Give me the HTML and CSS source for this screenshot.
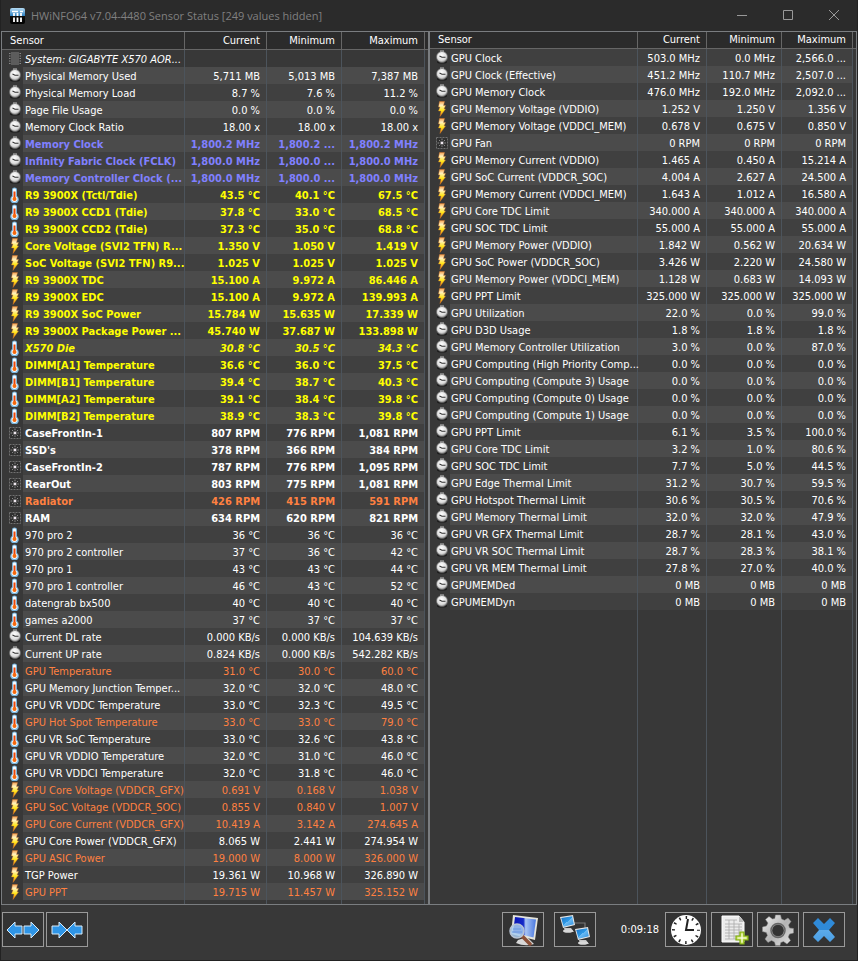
FILE: index.html
```
<!DOCTYPE html>
<html lang="en">
<head>
    <meta charset="UTF-8">
    <meta name="viewport" content="width=device-width, initial-scale=1.0">
    <title>HWiNFO64 Sensor Status</title>
    <link rel="stylesheet" href="styles.css">
</head>
<body>
    <!-- Shared icons -->
    <svg class="sprite" aria-hidden="true">
        <defs>
            <radialGradient id="dial" cx="45%" cy="35%" r="65%">
                <stop offset="0" stop-color="#ffffff"/>
                <stop offset="0.7" stop-color="#dcdcdc"/>
                <stop offset="1" stop-color="#8c8c8c"/>
            </radialGradient>
            <linearGradient id="spark" x1="0" y1="0" x2="0" y2="1">
                <stop offset="0" stop-color="#f5a050"/>
                <stop offset="0.25" stop-color="#fff2c0"/>
                <stop offset="0.6" stop-color="#ffe61a"/>
                <stop offset="1" stop-color="#f07a10"/>
            </linearGradient>
            <linearGradient id="logo" x1="0" y1="0" x2="0" y2="1">
                <stop offset="0" stop-color="#b5dcf5"/>
                <stop offset="0.5" stop-color="#2c7fc0"/>
                <stop offset="0.5" stop-color="#0c0c0c"/>
                <stop offset="1" stop-color="#000000"/>
            </linearGradient>
            <linearGradient id="blue" x1="0" y1="0" x2="1" y2="1">
                <stop offset="0" stop-color="#1a6fc0"/>
                <stop offset="0.5" stop-color="#2f9be8"/>
                <stop offset="0.5" stop-color="#6cbcf5"/>
                <stop offset="1" stop-color="#2d8ddb"/>
            </linearGradient>
            <linearGradient id="cross" x1="0" y1="0" x2="0" y2="1">
                <stop offset="0" stop-color="#2f8ad8"/>
                <stop offset="0.5" stop-color="#2f8ad8"/>
                <stop offset="0.5" stop-color="#5cabea"/>
                <stop offset="1" stop-color="#4a9ee4"/>
            </linearGradient>
            <linearGradient id="screen" x1="0" y1="0" x2="1" y2="0">
                <stop offset="0" stop-color="#0a14b4"/>
                <stop offset="0.45" stop-color="#1428c8"/>
                <stop offset="0.55" stop-color="#a8c4f4"/>
                <stop offset="1" stop-color="#4a78e0"/>
            </linearGradient>
            <linearGradient id="metal" x1="0" y1="0" x2="1" y2="1">
                <stop offset="0" stop-color="#f4f4f4"/>
                <stop offset="0.5" stop-color="#b4b4b4"/>
                <stop offset="1" stop-color="#e4e4e4"/>
            </linearGradient>
        </defs>
        <symbol id="icon-clock" viewBox="0 0 14 16">
            <ellipse cx="7" cy="12" rx="5" ry="1.500" fill="#1c1c1c"/>
            <rect x="5" y="0.500" width="4" height="2" fill="#bdbdbd"/>
            <circle cx="7" cy="7" r="5.500" fill="url(#dial)" stroke="#6a6a6a" stroke-width="0.700"/>
            <path d="M4.500 6 7 7.300h3.500" fill="none" stroke="#333" stroke-width="1.100"/>
        </symbol>
        <symbol id="icon-temp" viewBox="0 0 14 16">
            <path d="M4 2.500Q4 .5 6.500 .5T9 2.500V9A4.300 4.300 0 1 1 4 9Z" fill="#78b4dc"/>
            <path d="M5 2.500Q5 1.500 6.500 1.500T8 2.500V9.500A3 3 0 1 1 5 9.500Z" fill="#f4faff"/>
            <path d="M6.500 4.500V11" stroke="#e8480c" stroke-width="2"/>
            <circle cx="6.500" cy="12" r="2" fill="#f5690c"/>
        </symbol>
        <symbol id="icon-bolt" viewBox="0 0 14 16">
            <path d="M4.500 .5H9.500L8.500 4.500H10.500L9 8H10.500L5 15.500L6 10H3.500L5 6H3.500Z" fill="url(#spark)" stroke="#d87a2c" stroke-width="0.400"/>
        </symbol>
        <symbol id="icon-fan" viewBox="0 0 14 16">
            <rect x="1.500" y="2.500" width="11" height="11" fill="#303030" stroke="#707070" stroke-width="1" stroke-dasharray="2 1"/>
            <path d="M7 3.500V12.500M2.500 8H11.500M4 5L10 11M10 5L4 11" stroke="#8a8a8a" stroke-width="1" stroke-dasharray="1.500 .8"/>
            <circle cx="7" cy="8" r="1.300" fill="#f0e8f0"/>
        </symbol>
        <symbol id="icon-chip" viewBox="0 0 14 16">
            <path d="M1 2.500H13M1 5H13M1 7.500H13M1 10H13M1 12.500H13" stroke="#888" stroke-width="1" stroke-dasharray="1.500 9 1.500"/>
            <rect x="3" y="1" width="8" height="13" fill="#5c5c5c"/>
        </symbol>
        <symbol id="icon-pc" viewBox="0 0 18 18">
            <path d="M5 13L12 13L15 17H6Z" fill="#c8c8c8"/>
            <ellipse cx="9" cy="16" rx="5" ry="1.800" fill="#d8d8d8"/>
            <path d="M1 2L14 0L16 10L4 13Z" fill="#e6e6e6"/>
            <path d="M2.200 3L13.200 1.200L14.800 9.200L4.600 11.800Z" fill="url(#blue)"/>
        </symbol>
    </svg>

    <header class="titlebar">
        <svg class="logo" viewBox="0 0 15 16" aria-hidden="true">
            <rect width="15" height="16" rx="2" fill="url(#logo)"/>
            <path d="M2 3.500H8M10 3.500H13" stroke="#fff" stroke-width="1.500"/>
            <path d="M4 5V14M7.500 5V14M11 5V14" stroke="#fff" stroke-width="1.800" stroke-dasharray="3 1.500 5"/>
        </svg>
        <h1>HWiNFO64 v7.04-4480 Sensor Status [249 values hidden]</h1>
        <div class="window-buttons">
            <button type="button" aria-label="Minimize"><svg viewBox="0 0 10 10"><path d="M0 5.500H10"/></svg></button>
            <button type="button" aria-label="Maximize"><svg viewBox="0 0 10 10"><path d="M.5 .5H9.500V9.500H.5Z"/></svg></button>
            <button type="button" aria-label="Close"><svg viewBox="0 0 10 10"><path d="M0 0L10 10M10 0L0 10"/></svg></button>
        </div>
    </header>

    <main class="panels">
        <table class="sensors sensors-left">
            <colgroup><col class="c-icon"><col><col class="c-cur"><col class="c-min"><col class="c-max"><col class="c-end"></colgroup>
            <thead>
                <tr><th colspan="2">Sensor</th><th>Current</th><th>Minimum</th><th>Maximum</th><td></td></tr>
            </thead>
            <tbody id="left-rows"></tbody>
        </table>
        <table class="sensors sensors-right">
            <colgroup><col class="c-icon"><col><col class="c-cur"><col class="c-min"><col class="c-max"><col class="c-end"></colgroup>
            <thead>
                <tr><th colspan="2">Sensor</th><th>Current</th><th>Minimum</th><th>Maximum</th><td></td></tr>
            </thead>
            <tbody id="right-rows"></tbody>
        </table>
    </main>

    <footer class="toolbar">
        <div class="group">
            <button type="button" aria-label="Expand columns">
                <svg viewBox="0 0 36 24"><g fill="#2f95e6" stroke="#d8ecfa" stroke-width="1"><path d="M2 12L10 4V8H17V16H10V20Z"/><path d="M34 12L26 4V8H19V16H26V20Z"/></g></svg>
            </button>
            <button type="button" aria-label="Shrink columns">
                <svg viewBox="0 0 36 24"><g fill="#2f95e6" stroke="#d8ecfa" stroke-width="1"><path d="M18 12L10 4V8H3V16H10V20Z"/><path d="M18 12L26 4V8H33V16H26V20Z"/></g></svg>
            </button>
        </div>
        <div class="group group-right">
            <button type="button" aria-label="System summary">
                <svg viewBox="0 0 36 32">
                    <path d="M13 26L22 23L29 30Q20 33 11 29Z" fill="#d8d8d8"/>
                    <path d="M8 1L33 4L30 26L6 20Z" fill="#e4e4dc"/>
                    <path d="M10 3L31 5.500L28.500 23.500L8 18.500Z" fill="url(#screen)"/>
                    <path d="M17 22L25 30" stroke="#8c5038" stroke-width="3.500" stroke-linecap="round"/>
                    <circle cx="12" cy="17" r="7" fill="#a8ccf0" fill-opacity="0.850" stroke="#b8c4d4" stroke-width="1.500"/>
                    <path d="M8 15H16M7 18H17" stroke="#6a98e0" stroke-width="1.200"/>
                </svg>
            </button>
            <button type="button" aria-label="Remote monitoring" class="remote">
                <svg viewBox="0 0 36 32">
                    <path d="M17 9H28V16" fill="none" stroke="#777" stroke-width="1.200"/>
                    <use href="#icon-pc" x="2" y="1" width="18" height="18"/>
                    <use href="#icon-pc" x="17" y="13" width="18" height="18"/>
                </svg>
            </button>
            <time class="elapsed">0:09:18</time>
            <button type="button" aria-label="Reset clock">
                <svg viewBox="0 0 36 32">
                    <circle cx="18" cy="16" r="15" fill="#fff"/>
                    <circle cx="18" cy="16" r="12.500" fill="none" stroke="#222" stroke-width="3" stroke-dasharray="1.500 5.045" stroke-dashoffset=".75"/>
                    <path d="M20 5L18 16H26" fill="none" stroke="#222" stroke-width="2"/>
                </svg>
            </button>
            <button type="button" aria-label="Log to file">
                <svg viewBox="0 0 36 32">
                    <path d="M8 2H25L30 8V28H8Z" fill="#ececec" stroke="#fff"/>
                    <path d="M25 2V8H30Z" fill="#bbb"/>
                    <path d="M11 6H23M11 10H28M11 13H28M11 16H28M11 19H28M11 22H28M11 25H22M15 6V25M20 6V25M25 10V22" stroke="#aaa" stroke-width="0.800"/>
                    <path d="M26 18H30V22H34V26H30V30H26V26H22V22H26Z" fill="#c8e05a" stroke="#7fae10" stroke-width="1.200"/>
                    <path d="M28 19.500V28.500M23.500 24H32.500" stroke="#fff" stroke-width="1"/>
                </svg>
            </button>
            <button type="button" aria-label="Settings">
                <svg viewBox="0 0 36 32">
                    <g fill="url(#metal)" stroke="#888" stroke-width="0.500">
                        <path fill-rule="evenodd" d="M15.500 1H20.500L21.500 5L24.500 6.300L28 4L31 7.500L28.500 11L29.500 14L33.500 14.500V19L29.500 20L28.200 23L30.500 26.500L27 30L23.500 27.500L20.800 28.500L20 31.500H15.500L14.500 28L11.500 26.500L8 28.500L5 25L7.500 21.500L6.300 18.500L2.500 17.500V13L6.500 12L8 9L5.500 5.500L9 2.500L12.500 5L14.800 4.500ZM18 10.500A6 6 0 1 0 18.010 10.500Z"/>
                    </g>
                    <circle cx="18" cy="16.500" r="7" fill="none" stroke="#666" stroke-width="1.500"/>
                </svg>
            </button>
            <button type="button" aria-label="Close sensors">
                <svg viewBox="0 0 36 32"><path d="M7 9L12 4L18 10L24 4L29 9L23 16L29 23L24 28L18 22L12 28L7 23L13 16Z" fill="url(#cross)"/></svg>
            </button>
        </div>
    </footer>

    <script src="sensors.js"></script>
</body>
</html>
```
FILE: styles.css
```
* { box-sizing: border-box; }
body { margin: 0; min-height: 100vh; display: flex; flex-direction: column; background: #383838; color: #fff; font-family: "DejaVu Sans Condensed", "DejaVu Sans", sans-serif; font-stretch: condensed; font-size: 11px; border: 1px solid #222; border-top: 0; }
.sprite { position: absolute; width: 0; height: 0; }

/* Title bar */
.titlebar { display: flex; align-items: center; height: 31px; padding-left: 9px; background: #2b2b2b; }
.titlebar h1 { margin: 0 0 0 6px; flex: 1; font: normal 11px "Open Sans", sans-serif; color: #808080; white-space: nowrap; overflow: hidden; }
.logo { width: 15px; height: 16px; }
.window-buttons { display: flex; }
.window-buttons button { width: 46px; height: 31px; padding: 0; border: 0; background: none; }
.window-buttons svg { width: 10px; height: 10px; fill: none; stroke: #999; overflow: visible; }

/* Sensor tables */
.panels { flex: 1; display: grid; grid-template-columns: 1fr 1fr; }
.sensors { width: 100%; height: 100%; table-layout: fixed; border-collapse: separate; border-spacing: 0; border: 1px solid #7a7d80; background: #383838; }
.c-icon { width: 21px; }
.c-cur { width: 82px; }
.c-min { width: 75px; }
.c-max { width: 83px; }
.c-end { width: 3px; }
.sensors-right .c-icon { width: 20px; }
.sensors-right .c-cur { width: 69px; }
.sensors-right .c-max { width: 71px; }
th, td { padding: 0; height: 17px; line-height: 17px; white-space: nowrap; text-align: right; }
thead tr > * { height: 18px; background: #2b2b2b; border-bottom: 1px solid #666; font-weight: normal; }
.sensors-right thead tr > * { height: 17px; padding-bottom: 1px; line-height: 15px; vertical-align: top; }
thead th { padding-right: 6px; border-right: 1px solid #666; }
thead th:first-child { padding-left: 8px; text-align: left; }
.icon svg { display: block; width: 14px; height: 16px; margin-left: 6px; }
.sensors-right .icon svg { margin-left: 5px; }
.name, .value { padding-top: 2px; line-height: 15px; border-right: 1px solid #4c545c; background-color: #404040; background-clip: padding-box; }
.name { padding-left: 2px; text-align: left; }
.sensors-right .name { padding-left: 1px; }
.value { padding-right: 6px; }
tr:nth-child(even) > .name, tr:nth-child(even) > .value { background-color: #4b4b4b; }
.bold { font-weight: bold; }
.italic { font-style: italic; }
.blue { color: #8080ff; }
.yellow { color: #ffff00; }
.orange { color: #ff8040; }
.system > .name, .system > .value, .filler > .name.name, .filler > .value.value { background: none; }
.filler > td { height: auto; line-height: 0; }

/* Toolbar */
.toolbar { display: flex; justify-content: space-between; padding: 7px 12px 13px 1px; }
.group { display: flex; align-items: center; gap: 2px; }
.group-right { gap: 4px; }
.toolbar button { display: flex; align-items: center; justify-content: center; width: 42px; height: 35px; padding: 0; border: 1px solid #999; background: #333; }
.toolbar button svg { width: 36px; height: 32px; }
.toolbar .remote { margin-left: 6px; }
.elapsed { width: 61px; padding-right: 2px; text-align: right; }
```
FILE: sensors.js
```
// icon | name | current | minimum | maximum | style
const left = `
chip|System: GIGABYTE X570 AOR...||||italic system
clock|Physical Memory Used|5,711 MB|5,013 MB|7,387 MB
clock|Physical Memory Load|8.7 %|7.6 %|11.2 %
clock|Page File Usage|0.0 %|0.0 %|0.0 %
clock|Memory Clock Ratio|18.00 x|18.00 x|18.00 x
clock|Memory Clock|1,800.2 MHz|1,800.2 ...|1,800.2 MHz|bold blue
clock|Infinity Fabric Clock (FCLK)|1,800.0 MHz|1,800.0 ...|1,800.0 MHz|bold blue
clock|Memory Controller Clock (...|1,800.0 MHz|1,800.0 ...|1,800.0 MHz|bold blue
temp|R9 3900X (Tctl/Tdie)|43.5 °C|40.1 °C|67.5 °C|bold yellow
temp|R9 3900X CCD1 (Tdie)|37.8 °C|33.0 °C|68.5 °C|bold yellow
temp|R9 3900X CCD2 (Tdie)|37.3 °C|35.0 °C|68.8 °C|bold yellow
bolt|Core Voltage (SVI2 TFN) R...|1.350 V|1.050 V|1.419 V|bold yellow
bolt|SoC Voltage (SVI2 TFN) R9...|1.025 V|1.025 V|1.025 V|bold yellow
bolt|R9 3900X TDC|15.100 A|9.972 A|86.446 A|bold yellow
bolt|R9 3900X EDC|15.100 A|9.972 A|139.993 A|bold yellow
bolt|R9 3900X SoC Power|15.784 W|15.635 W|17.339 W|bold yellow
bolt|R9 3900X Package Power ...|45.740 W|37.687 W|133.898 W|bold yellow
temp|X570 Die|30.8 °C|30.5 °C|34.3 °C|bold italic yellow
temp|DIMM[A1] Temperature|36.6 °C|36.0 °C|37.5 °C|bold yellow
temp|DIMM[B1] Temperature|39.4 °C|38.7 °C|40.3 °C|bold yellow
temp|DIMM[A2] Temperature|39.1 °C|38.4 °C|39.8 °C|bold yellow
temp|DIMM[B2] Temperature|38.9 °C|38.3 °C|39.8 °C|bold yellow
fan|CaseFrontIn-1|807 RPM|776 RPM|1,081 RPM|bold
fan|SSD's|378 RPM|366 RPM|384 RPM|bold
fan|CaseFrontIn-2|787 RPM|776 RPM|1,095 RPM|bold
fan|RearOut|803 RPM|775 RPM|1,081 RPM|bold
fan|Radiator|426 RPM|415 RPM|591 RPM|bold orange
fan|RAM|634 RPM|620 RPM|821 RPM|bold
temp|970 pro 2|36 °C|36 °C|36 °C
temp|970 pro 2 controller|37 °C|36 °C|42 °C
temp|970 pro 1|43 °C|43 °C|44 °C
temp|970 pro 1 controller|46 °C|43 °C|52 °C
temp|datengrab bx500|40 °C|40 °C|40 °C
temp|games a2000|37 °C|37 °C|37 °C
clock|Current DL rate|0.000 KB/s|0.000 KB/s|104.639 KB/s
clock|Current UP rate|0.824 KB/s|0.000 KB/s|542.282 KB/s
temp|GPU Temperature|31.0 °C|30.0 °C|60.0 °C|orange
temp|GPU Memory Junction Temper...|32.0 °C|32.0 °C|48.0 °C
temp|GPU VR VDDC Temperature|33.0 °C|32.3 °C|49.5 °C
temp|GPU Hot Spot Temperature|33.0 °C|33.0 °C|79.0 °C|orange
temp|GPU VR SoC Temperature|33.0 °C|32.6 °C|43.8 °C
temp|GPU VR VDDIO Temperature|32.0 °C|31.0 °C|46.0 °C
temp|GPU VR VDDCI Temperature|32.0 °C|31.8 °C|46.0 °C
bolt|GPU Core Voltage (VDDCR_GFX)|0.691 V|0.168 V|1.038 V|orange
bolt|GPU SoC Voltage (VDDCR_SOC)|0.855 V|0.840 V|1.007 V|orange
bolt|GPU Core Current (VDDCR_GFX)|10.419 A|3.142 A|274.645 A|orange
bolt|GPU Core Power (VDDCR_GFX)|8.065 W|2.441 W|274.954 W
bolt|GPU ASIC Power|19.000 W|8.000 W|326.000 W|orange
bolt|TGP Power|19.361 W|10.968 W|326.890 W
bolt|GPU PPT|19.715 W|11.457 W|325.152 W|orange`;

const right = `
clock|GPU Clock|503.0 MHz|0.0 MHz|2,566.0 ...
clock|GPU Clock (Effective)|451.2 MHz|110.7 MHz|2,507.0 ...
clock|GPU Memory Clock|476.0 MHz|192.0 MHz|2,092.0 ...
bolt|GPU Memory Voltage (VDDIO)|1.252 V|1.250 V|1.356 V
bolt|GPU Memory Voltage (VDDCI_MEM)|0.678 V|0.675 V|0.850 V
fan|GPU Fan|0 RPM|0 RPM|0 RPM
bolt|GPU Memory Current (VDDIO)|1.465 A|0.450 A|15.214 A
bolt|GPU SoC Current (VDDCR_SOC)|4.004 A|2.627 A|24.500 A
bolt|GPU Memory Current (VDDCI_MEM)|1.643 A|1.012 A|16.580 A
bolt|GPU Core TDC Limit|340.000 A|340.000 A|340.000 A
bolt|GPU SOC TDC Limit|55.000 A|55.000 A|55.000 A
bolt|GPU Memory Power (VDDIO)|1.842 W|0.562 W|20.634 W
bolt|GPU SoC Power (VDDCR_SOC)|3.426 W|2.220 W|24.580 W
bolt|GPU Memory Power (VDDCI_MEM)|1.128 W|0.683 W|14.093 W
bolt|GPU PPT Limit|325.000 W|325.000 W|325.000 W
clock|GPU Utilization|22.0 %|0.0 %|99.0 %
clock|GPU D3D Usage|1.8 %|1.8 %|1.8 %
clock|GPU Memory Controller Utilization|3.0 %|0.0 %|87.0 %
clock|GPU Computing (High Priority Comp...|0.0 %|0.0 %|0.0 %
clock|GPU Computing (Compute 3) Usage|0.0 %|0.0 %|0.0 %
clock|GPU Computing (Compute 0) Usage|0.0 %|0.0 %|0.0 %
clock|GPU Computing (Compute 1) Usage|0.0 %|0.0 %|0.0 %
clock|GPU PPT Limit|6.1 %|3.5 %|100.0 %
clock|GPU Core TDC Limit|3.2 %|1.0 %|80.6 %
clock|GPU SOC TDC Limit|7.7 %|5.0 %|44.5 %
clock|GPU Edge Thermal Limit|31.2 %|30.7 %|59.5 %
clock|GPU Hotspot Thermal Limit|30.6 %|30.5 %|70.6 %
clock|GPU Memory Thermal Limit|32.0 %|32.0 %|47.9 %
clock|GPU VR GFX Thermal Limit|28.7 %|28.1 %|43.0 %
clock|GPU VR SOC Thermal Limit|28.7 %|28.3 %|38.1 %
clock|GPU VR MEM Thermal Limit|27.8 %|27.0 %|40.0 %
clock|GPUMEMDed|0 MB|0 MB|0 MB
clock|GPUMEMDyn|0 MB|0 MB|0 MB`;

function fill(id, data) {
    const rows = data.trim().split('\n').map(line => {
        const [icon, name, cur, min, max, style = ''] = line.split('|');
        const values = [cur, min, max].map(v => `<td class="value">${v}</td>`).join('');
        return `<tr class="${style}"><td class="icon"><svg aria-hidden="true"><use href="#icon-${icon}"/></svg></td><td class="name">${name}</td>${values}<td></td></tr>`;
    });
    // Last row stretches so the column lines reach the bottom
    rows.push('<tr class="filler"><td></td><td class="name"></td><td class="value"></td><td class="value"></td><td class="value"></td><td></td></tr>');
    document.getElementById(id).innerHTML = rows.join('');
}

fill('left-rows', left);
fill('right-rows', right);
```
